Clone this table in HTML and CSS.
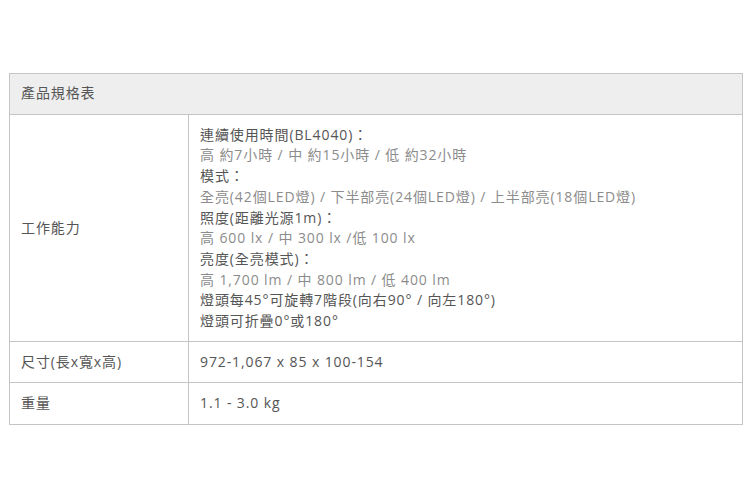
FILE: index.html
```html
<!DOCTYPE html>
<html lang="zh-Hant">
<head>
<meta charset="utf-8">
<link rel="stylesheet" href="styles.css">
</head>
<body>
<div class="page">
<table class="spec">
  <thead>
    <tr><th colspan="2">產品規格表</th></tr>
  </thead>
  <tbody>
    <tr class="multi">
      <td class="label">工作能力</td>
      <td class="value">
        <div class="dark">連續使用時間(BL4040)：</div>
        <div class="gray">高 約7小時 / 中 約15小時 / 低 約32小時</div>
        <div class="dark">模式：</div>
        <div class="gray">全亮(42個LED燈) / 下半部亮(24個LED燈) / 上半部亮(18個LED燈)</div>
        <div class="dark">照度(距離光源1m)：</div>
        <div class="gray">高 600 lx / 中 300 lx /低 100 lx</div>
        <div class="dark">亮度(全亮模式)：</div>
        <div class="gray">高 1,700 lm / 中 800 lm / 低 400 lm</div>
        <div class="dark">燈頭每45°可旋轉7階段(向右90° / 向左180°)</div>
        <div class="dark">燈頭可折疊0°或180°</div>
      </td>
    </tr>
    <tr class="single">
      <td class="label">尺寸(長x寬x高)</td>
      <td class="value">972-1,067 x 85 x 100-154</td>
    </tr>
    <tr class="single">
      <td class="label">重量</td>
      <td class="value">1.1 - 3.0 kg</td>
    </tr>
  </tbody>
</table>
</div>
</body>
</html>
```

FILE: styles.css
```css
html, body {
  margin: 0;
  padding: 0;
  background: #fff;
}
.page {
  padding: 73px 8px 0 9px;
}
.spec {
  width: 734px;
  border-collapse: collapse;
  font-family: "Open Sans", "Noto Sans CJK TC", sans-serif;
  font-size: 14px;
  line-height: 20.7px;
  letter-spacing: 0.9px;
  color: #555;
}
.spec th,
.spec td {
  border: 1px solid #c4c4c4;
  padding: 9px 11px 10px 11px;
  text-align: left;
  vertical-align: middle;
  font-weight: normal;
}
.spec tr.multi td {
  padding-top: 10px;
  padding-bottom: 9px;
}
.spec tr.single td {
  padding-top: 10px;
  padding-bottom: 10px;
}
.spec th {
  background: #eeeeee;
  color: #555;
}
.spec td.label {
  width: 156px;
  color: #555;
}
.spec .dark {
  color: #555;
}
.spec .gray {
  color: #8c8c8c;
}
```
